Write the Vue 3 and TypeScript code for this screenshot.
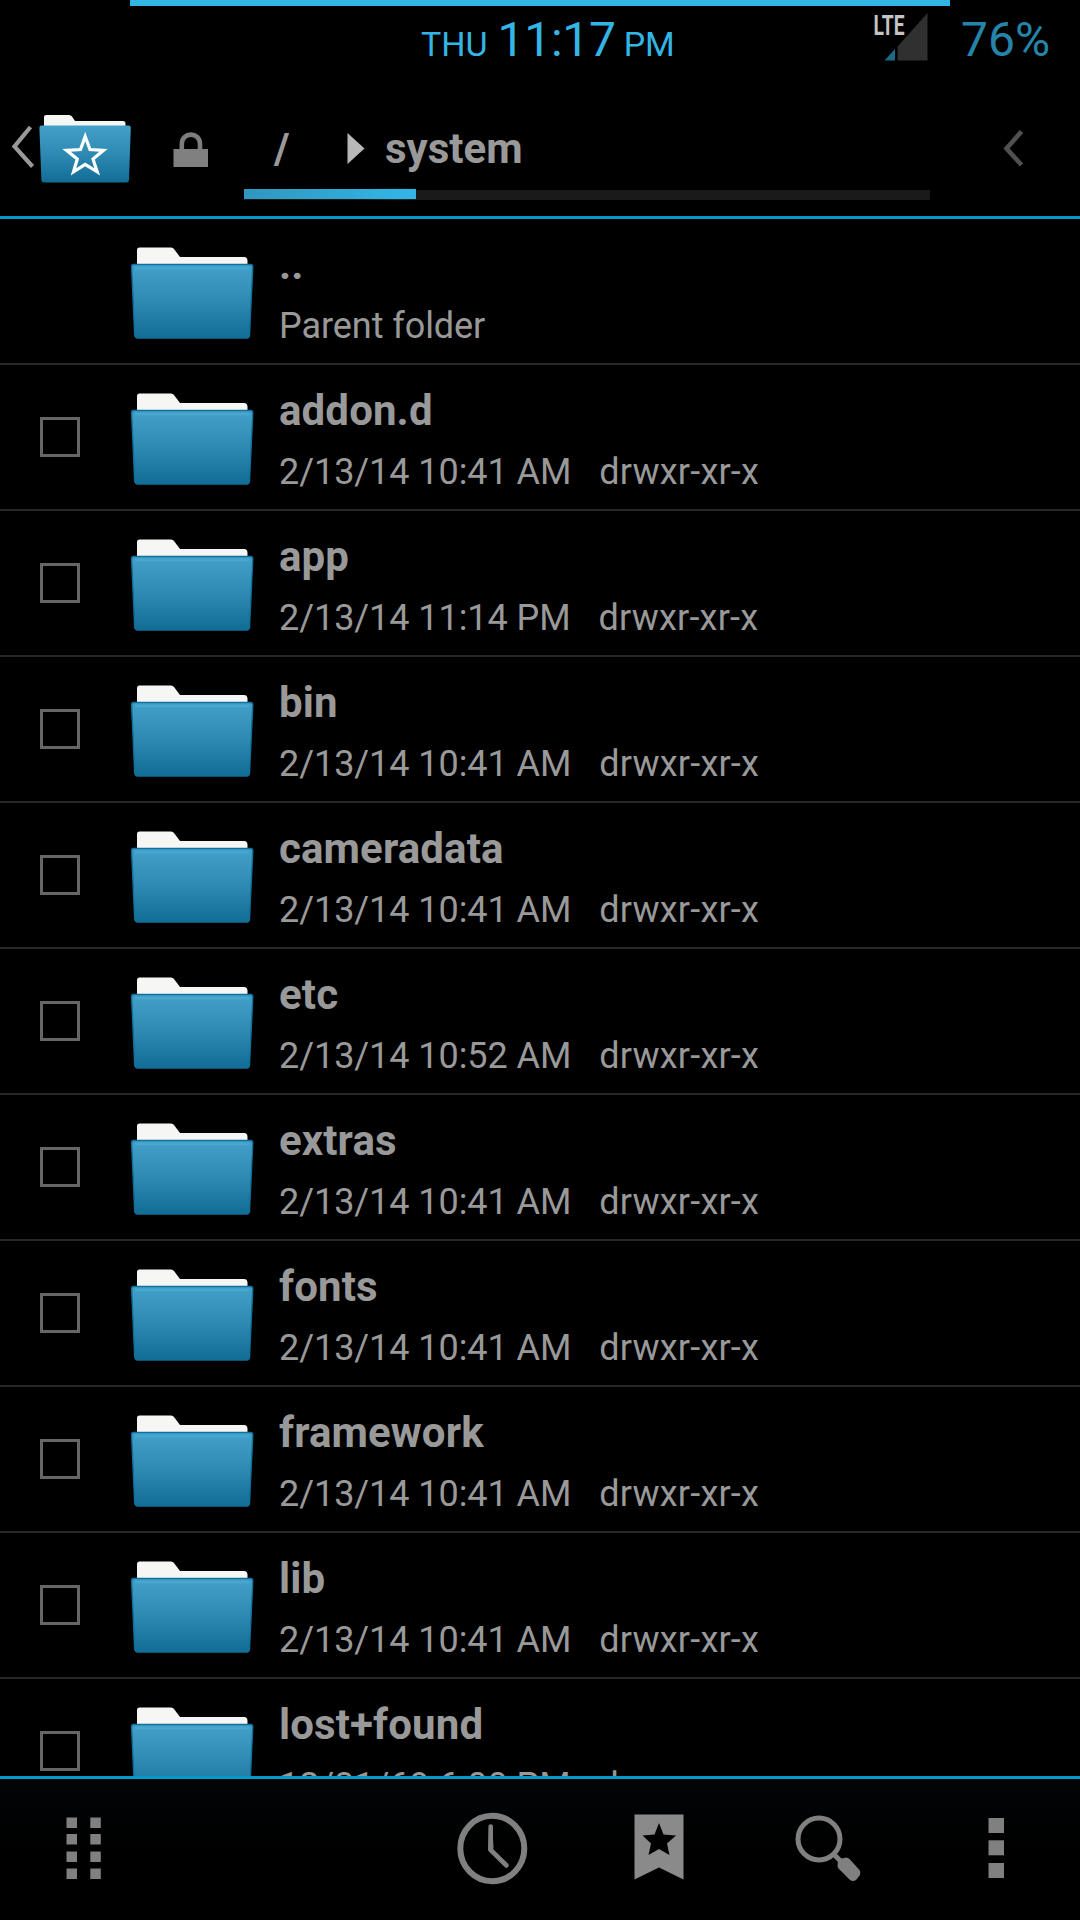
<script setup lang="ts">
interface Entry {
  name: string
  date: string
  perms: string
  parent?: boolean
}

const entries: Entry[] = [
  { name: '..', date: 'Parent folder', perms: '', parent: true },
  { name: 'addon.d', date: '2/13/14 10:41 AM', perms: 'drwxr-xr-x' },
  { name: 'app', date: '2/13/14 11:14 PM', perms: 'drwxr-xr-x' },
  { name: 'bin', date: '2/13/14 10:41 AM', perms: 'drwxr-xr-x' },
  { name: 'cameradata', date: '2/13/14 10:41 AM', perms: 'drwxr-xr-x' },
  { name: 'etc', date: '2/13/14 10:52 AM', perms: 'drwxr-xr-x' },
  { name: 'extras', date: '2/13/14 10:41 AM', perms: 'drwxr-xr-x' },
  { name: 'fonts', date: '2/13/14 10:41 AM', perms: 'drwxr-xr-x' },
  { name: 'framework', date: '2/13/14 10:41 AM', perms: 'drwxr-xr-x' },
  { name: 'lib', date: '2/13/14 10:41 AM', perms: 'drwxr-xr-x' },
  { name: 'lost+found', date: '12/31/69 6:00 PM', perms: 'drwxrwx---' },
]

const gridRows = [0.5, 17, 34.5, 51.5]
</script>

<template>
  <div class="screen">
    <svg class="defs" width="0" height="0" aria-hidden="true">
      <defs>
        <linearGradient id="folderFill" x1="0" y1="0" x2="0" y2="1">
          <stop offset="0" stop-color="#43a0c9" />
          <stop offset="0.5" stop-color="#2e8ab3" />
          <stop offset="1" stop-color="#116d96" />
        </linearGradient>
      </defs>
    </svg>

    <header class="status">
      <div class="charge"></div>
      <div class="clock"><span class="small">THU</span><span class="time">11:17</span><span class="small pm">PM</span></div>
      <svg class="signal" width="56" height="52" viewBox="0 0 56 52">
        <path d="M24.6 34.500 L54.500 1 V48.500 H24.600Z" fill="#303030" />
        <path d="M11.500 48.500 L22 37 V48.500Z" fill="#1c6a88" />
        <text x="0.500" y="22.700" font-size="27.500" font-weight="700" textLength="31" lengthAdjust="spacingAndGlyphs" fill="#c4c4c4">LTE</text>
      </svg>
      <div class="battery">76%</div>
    </header>

    <nav class="pathbar">
      <svg class="back" width="24" height="44" viewBox="0 0 24 44">
        <path d="M19.500 2 L3.500 21.500 L21.500 41.500" fill="none" stroke="#999" stroke-width="4.200" />
      </svg>
      <svg class="home" width="94" height="72" viewBox="0 0 94 72">
        <path d="M6 14 V3 Q6 1 8 1 H31 Q33 1 34 2.500 L37 7 H85 Q87.500 7 87.500 9.500 V14Z" fill="#f6f6f4" />
        <path d="M3 11.500 H90.500 Q92.900 11.500 92.800 14 L91 66 Q90.900 68.500 88.500 68.500 H6 Q3.500 68.500 3.400 66 L1.400 14 Q1.400 11.500 3 11.500Z" fill="url(#folderFill)" />
        <path d="M47.200 22.500 L52 35.500 L65.500 36.300 L55 45 L59.200 57.800 L47.200 50.300 L35.500 57.800 L39.300 45 L28.500 36.300 L42.500 35.500Z" fill="none" stroke="#fff" stroke-width="3.200" />
      </svg>
      <svg class="lock" width="36" height="38" viewBox="0 0 36 38">
        <path d="M8.800 19 V12 C8.800 -.500 27 -.500 27 12 V19" fill="none" stroke="#7d7d7d" stroke-width="4.600" />
        <rect x="0.500" y="17" width="34.500" height="18" fill="#808080" />
      </svg>
      <div class="crumbs">
        <div class="crumb-row">
          <span class="root">/</span>
          <svg class="arrow" width="18" height="34" viewBox="0 0 18 34"><path d="M.500 1 L17.500 16.500 L.500 32Z" fill="#b8b8b8" /></svg>
          <span class="dir">system</span>
        </div>
        <div class="track"><div class="fill"></div></div>
      </div>
      <svg class="collapse" width="22" height="40" viewBox="0 0 22 40">
        <path d="M18.500 2.500 L3.500 19.500 L18.500 36" fill="none" stroke="#505050" stroke-width="4.600" />
      </svg>
    </nav>

    <main class="list">
      <div v-for="e in entries" :key="e.name" class="row">
        <div class="check"><i v-if="!e.parent"></i></div>
        <svg class="folder" width="126" height="96" viewBox="0 0 126 96">
          <path d="M7 22 V5 Q7 2.500 9.500 2.500 H41 Q43 2.500 44 4 L50 12 H114 Q117.500 12 117.500 16 V22Z" fill="#f6f6f4" />
          <path d="M3.500 19.500 H120.500 Q122.800 19.500 122.800 22 L119.500 90 Q119.300 93 116.500 93 H8 Q5 93 4.700 90 L1.600 22 Q1.600 19.500 3.500 19.500Z" fill="url(#folderFill)" stroke="#10709a" stroke-width="1.400" />
          <path d="M5 23 H119.500" stroke="#4aaad3" stroke-width="2.500" opacity="0.800" />
        </svg>
        <div class="info">
          <div class="name">{{ e.name }}</div>
          <div class="meta"><span class="date">{{ e.date }}</span><span class="perms">{{ e.perms }}</span></div>
        </div>
      </div>
    </main>

    <footer class="toolbar">
      <svg class="grid" width="36" height="64" viewBox="0 0 36 64" fill="#808080">
        <template v-for="y in gridRows" :key="y">
          <rect x="0.500" :y="y" width="10.500" height="10.500" />
          <rect x="24.300" :y="y" width="10.500" height="10.500" />
        </template>
      </svg>
      <svg class="history" width="72" height="74" viewBox="0 0 72 74">
        <ellipse cx="36.300" cy="36.500" rx="32" ry="32.700" fill="none" stroke="#808080" stroke-width="6" />
        <path d="M34.700 14.500 L34.700 38 L50.500 53.500" fill="none" stroke="#808080" stroke-width="4.600" stroke-linecap="round" />
        <path d="M33 16 L32 38 L35 40 L37.500 36 L36.500 16Z" fill="#808080" />
      </svg>
      <svg class="bookmark" width="50" height="68" viewBox="0 0 50 68">
        <path fill-rule="evenodd" fill="#8a8a8a" d="M.500 .500 H49.500 V65.500 L25 53.500 L.500 65.500Z M25 9 L20.500 20.500 L8.500 21.500 L17 29.500 L14.500 41 L25 35 L35.500 41 L33 29.500 L42 21.500 L29.500 20.500Z" />
      </svg>
      <svg class="search" width="68" height="70" viewBox="0 0 68 70">
        <circle cx="24" cy="24" r="21" fill="none" stroke="#808080" stroke-width="5" />
        <path d="M38 38.500 L47 47.500" stroke="#808080" stroke-width="5" />
        <path d="M43 46 L45 44 L51 42.500 Q53 42.500 54.500 44 L64.500 55 Q66 57 65 60 L61 65 Q58 67 55 65 L43.500 53.500 Q42.500 52 42.500 50Z" fill="#808080" />
      </svg>
      <svg class="more" width="18" height="64" viewBox="0 0 18 64" fill="#808080">
        <rect x="0.500" y="1" width="15.500" height="15" /><rect x="0.500" y="23.300" width="15.500" height="15" /><rect x="0.500" y="46" width="15.500" height="15" />
      </svg>
    </footer>
  </div>
</template>

<style>
html, body { margin: 0; background: #000; }
</style>

<style scoped>
.screen { width: 1080px; height: 1920px; overflow: hidden; display: flex; flex-direction: column; background: #000; color: #999; font-family: Roboto, "Liberation Sans", sans-serif; }
.defs { position: absolute; }
svg { display: block; flex: none; }

.status { position: relative; height: 75px; display: flex; flex: none; color: #33b5e5; }
.charge { position: absolute; top: 0; left: 130px; width: 820px; height: 6px; background: #33b5e5; }
.clock { margin-left: 421px; width: 452px; line-height: 58px; padding-top: 11px; white-space: nowrap; }
.small { font-size: 34px; font-weight: 400; }
.time { font-size: 48px; letter-spacing: -0.300px; margin: 0 8px 0 10px; }
.signal { margin-top: 12px; }
.battery { margin-left: 32px; padding-top: 11px; font-size: 48px; line-height: 58px; color: #2585a9; }

.pathbar { height: 141px; flex: none; display: flex; border-bottom: 3px solid #0099cc; }
.back { margin: 50px 0 0 11px; }
.home { margin: 39px 0 0 3px; }
.lock { margin: 57px 0 0 41px; }
.crumbs { margin-left: 35px; width: 686px; }
.crumb-row { height: 115px; display: flex; line-height: 148px; font-size: 42px; font-weight: 700; }
.root { width: 73px; padding-left: 30px; }
.arrow { margin: 57px 20px 0 0; }
.track { height: 10px; background: #1a1a1a; }
.fill { width: 172px; height: 10px; position: relative; top: -1px; background: linear-gradient(90deg, #2f97bf, #33b5e5); }
.fill::after { content: ""; position: absolute; right: 0; top: -2px; width: 70px; height: 14px; background: radial-gradient(ellipse at 70% 50%, rgba(51, 181, 229, 0.5), transparent 70%); }
.collapse { margin: 54px 0 0 73px; }

.list { height: 1557px; flex: none; overflow: hidden; }
.row { box-sizing: border-box; height: 146px; border-bottom: 2px solid #282828; display: flex; }
.check { width: 130px; flex: none; }
.check i { display: block; box-sizing: border-box; width: 40px; height: 40px; margin: 52px 0 0 40px; border: 3px solid #666; }
.folder { margin-top: 26px; }
.info { margin-left: 23px; white-space: nowrap; }
.name { font-size: 42px; font-weight: 700; letter-spacing: 0.120px; line-height: 50px; margin-top: 21px; }
.meta { font-size: 36px; line-height: 44px; margin-top: 14px; }
.date { letter-spacing: -0.060px; }
.perms { margin-left: 28px; letter-spacing: 0.200px; }

.toolbar { height: 141px; flex: none; border-top: 3px solid #0099cc; display: flex; background: linear-gradient(#020406, #000 55%); }
.grid { margin: 38px 0 0 66px; }
.history { margin: 33px 0 0 354px; }
.bookmark { margin: 35px 0 0 106px; }
.search { margin: 36px 0 0 111px; }
.more { margin: 38px 0 0 125px; }
</style>
